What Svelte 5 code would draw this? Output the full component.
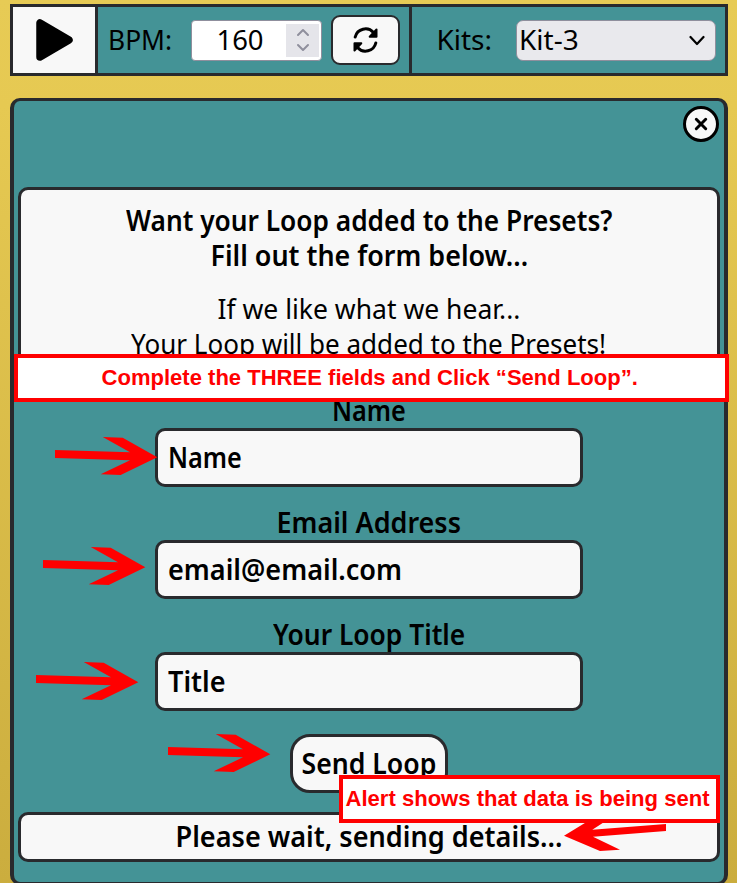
<script>
  // Scales a line of text horizontally to a given width.
  function fit(node, width) {
    const natural = node.offsetWidth;
    if (natural) node.style.transform = `scaleX(${width / natural})`;
  }

  const fields = [
    { label: 'Name', labelWidth: 74, value: 'Name', valueWidth: 74 },
    { label: 'Email Address', labelWidth: 184, value: 'email@email.com', valueWidth: 234 },
    { label: 'Your Loop Title', labelWidth: 192, value: 'Title', valueWidth: 58 }
  ];
  const arrows = [[55, 450], [43, 560], [36, 675], [168, 747]];
</script>

<div class="page">
  <header class="toolbar">
    <button class="play" aria-label="Play">
      <svg width="38" height="44" viewBox="0 0 38 44"><path d="M5 5v34L34 22z" fill="#000" stroke="#000" stroke-width="7.5" stroke-linejoin="round" /></svg>
    </button>
    <div class="tempo">
      <span class="text bpm" use:fit={64}>BPM:</span>
      <div class="number">
        <span class="text" use:fit={47}>160</span>
        <div class="spin">
          <svg width="16" height="24" viewBox="0 0 16 24" fill="none" stroke="#8f8f9d" stroke-width="2" stroke-linecap="round" stroke-linejoin="round"><path d="M3 7l5-5 5 5M3 17l5 5 5-5" /></svg>
        </div>
      </div>
      <button class="refresh" aria-label="Refresh">
        <svg width="28" height="28" viewBox="0 0 28 28" fill="none" stroke="#000" stroke-width="3" stroke-linecap="round" stroke-linejoin="round"><path d="M3.200 11A10.600 10.600 0 0 1 21.500 6.500L23 8M23.800 17A10.600 10.600 0 0 1 5.500 21.500L4 20" /><path d="M24.500 3.500v7.300h-6.800zM2.500 24.500v-7.300h6.800z" fill="#000" stroke-width="2" /></svg>
      </button>
    </div>
    <div class="kits">
      <span class="text" use:fit={56}>Kits:</span>
      <div class="select">
        <span class="text left" use:fit={60}>Kit-3</span>
        <svg width="16" height="12" viewBox="0 0 16 12" fill="none" stroke="#000" stroke-width="2.200" stroke-linecap="round" stroke-linejoin="round"><path d="M1.500 3L8 10l6.500-7" /></svg>
      </div>
    </div>
  </header>

  <main class="panel">
    <div class="top">
      <button class="close" aria-label="Close">
        <svg width="14" height="14" viewBox="0 0 14 14" stroke="#000" stroke-width="3" stroke-linecap="round"><path d="M2.300 2.300l9.400 9.400M11.700 2.300l-9.400 9.400" /></svg>
      </button>
    </div>
    <section class="intro">
      <h2><span class="text" use:fit={486}>Want your Loop added to the Presets?</span><span class="text" use:fit={318}>Fill out the form below...</span></h2>
      <p><span class="text" use:fit={303}>If we like what we hear...</span><span class="text" use:fit={475}>Your Loop will be added to the Presets!</span></p>
    </section>
    <form>
      {#each fields as field}
        <div class="field">
          <div class="label"><span class="text" use:fit={field.labelWidth}>{field.label}</span></div>
          <div class="input"><span class="text left" use:fit={field.valueWidth}>{field.value}</span></div>
        </div>
      {/each}
      <button type="button" class="send"><span class="text" use:fit={135}>Send Loop</span></button>
    </form>
    <div class="status"><span class="text" use:fit={387}>Please wait, sending details...</span></div>
  </main>

  <svg class="arrows" width="737" height="883" viewBox="0 0 737 883" fill="#f00">
    {#each arrows as [x, y]}
      <path transform="translate({x} {y})" d="M0 0L75 2.300 47.700-13 67.700-12.300 102.300 7.300 65.700 25 45.700 24.300 75 10.300 0 8z" />
    {/each}
    <path d="M564 835.700L598 815 618 813 592.300 829.700 666 824v7L593 836.700l27 13-20 1.300z" />
  </svg>
  <div class="note complete"><span class="text" use:fit={536}>Complete the THREE fields and Click “Send Loop”.</span></div>
  <div class="note alert"><span class="text" use:fit={364}>Alert shows that data is being sent</span></div>
</div>

<style>
  :global(body) { margin: 0; }
  .page, .page * { box-sizing: border-box; }
  .page {
    position: relative;
    width: 737px;
    height: 883px;
    overflow: hidden;
    padding: 4px 9px 0 10px;
    background: linear-gradient(#e7cb55, #e6c952 12%, #cbad3e);
    color: #000;
    font: 28px/35px "Noto Sans", "Open Sans", sans-serif;
  }
  button { font: inherit; color: inherit; padding: 0; margin: 0; }
  svg { display: block; flex: none; }
  .text { display: block; width: max-content; flex: none; white-space: nowrap; }
  .left { transform-origin: left; }
  .toolbar {
    display: flex;
    height: 72px;
    border: 3px solid #292a2d;
    background: #449396;
  }
  .toolbar .text { padding-bottom: 2px; }
  .play {
    width: 85px;
    display: flex;
    align-items: center;
    padding-left: 22px;
    border: 0;
    border-right: 3px solid #292a2d;
    background: #f8f8f8;
  }
  .tempo {
    display: flex;
    align-items: center;
    width: 314px;
    border-right: 3px solid #292a2d;
    justify-content: flex-end;
    padding-right: 9px;
  }
  .bpm { margin-right: 17px; }
  .number {
    display: flex;
    align-items: center;
    justify-content: flex-end;
    gap: 22px;
    width: 131px;
    height: 41px;
    padding-right: 2px;
    margin-right: 9px;
    border: 1px solid #8f8f9d;
    border-radius: 4px;
    background: #fff;
  }
  .spin {
    display: flex;
    align-items: center;
    justify-content: center;
    width: 33px;
    height: 33px;
    background: #e5e5ea;
  }
  .refresh {
    display: flex;
    align-items: center;
    justify-content: center;
    width: 69px;
    height: 50px;
    border: 2px solid #292a2d;
    border-radius: 9px;
    background: #f8f8f8;
  }
  .kits {
    display: flex;
    align-items: center;
    justify-content: flex-end;
    flex: 1;
    padding-right: 9px;
    gap: 24px;
  }
  .select {
    display: flex;
    align-items: center;
    justify-content: space-between;
    width: 200px;
    height: 41px;
    padding: 0 10px 0 2px;
    border: 1px solid #8f8f9d;
    border-radius: 7px;
    background: #e9e9ed;
  }
  .panel {
    height: 787px;
    margin-top: 22px;
    padding: 0 4px;
    border: solid #292a2d;
    border-width: 3px 4px;
    border-radius: 10px;
    background: #449396;
  }
  .top { display: flex; justify-content: flex-end; height: 86px; padding: 5px 1px; }
  .close {
    display: flex;
    align-items: center;
    justify-content: center;
    width: 36px;
    height: 36px;
    border: 3px solid #000;
    border-radius: 50%;
    background: #f8f8f8;
  }
  .intro {
    height: 200px;
    padding-top: 13px;
    border: 3px solid #292a2d;
    border-radius: 10px;
    background: #f8f8f8;
  }
  h2, p { display: flex; flex-direction: column; align-items: center; margin: 0; font-size: inherit; }
  h2 { font-weight: 600; }
  p { margin-top: 18px; }
  form { display: flex; flex-direction: column; align-items: center; padding-top: 6px; font-weight: 600; }
  .field { width: 428px; height: 112px; }
  .label { display: flex; justify-content: center; height: 35px; }
  .input {
    display: flex;
    align-items: center;
    height: 59px;
    padding-left: 10px;
    border: 3px solid #292a2d;
    border-radius: 10px;
    background: #f8f8f8;
  }
  .send {
    display: flex;
    align-items: center;
    justify-content: center;
    width: 158px;
    height: 59px;
    margin-top: 5px;
    border: 3px solid #292a2d;
    border-radius: 20px;
    background: #f8f8f8;
    font-weight: 600;
  }
  .status {
    display: flex;
    align-items: center;
    justify-content: center;
    height: 50px;
    margin-top: 19px;
    padding-bottom: 2px;
    border: 3px solid #292a2d;
    border-radius: 10px;
    background: #f8f8f8;
    font-weight: 600;
  }
  .arrows { position: absolute; left: 0; top: 0; }
  .note {
    position: absolute;
    display: flex;
    align-items: center;
    justify-content: center;
    height: 48px;
    padding-right: 4px;
    border: 4px solid #f00;
    background: #fff;
    color: #f00;
    font: bold 22px/26px "Liberation Sans", Arial, sans-serif;
  }
  .complete { left: 14px; top: 354px; width: 715px; }
  .alert { left: 339px; top: 775px; width: 381px; }
</style>
